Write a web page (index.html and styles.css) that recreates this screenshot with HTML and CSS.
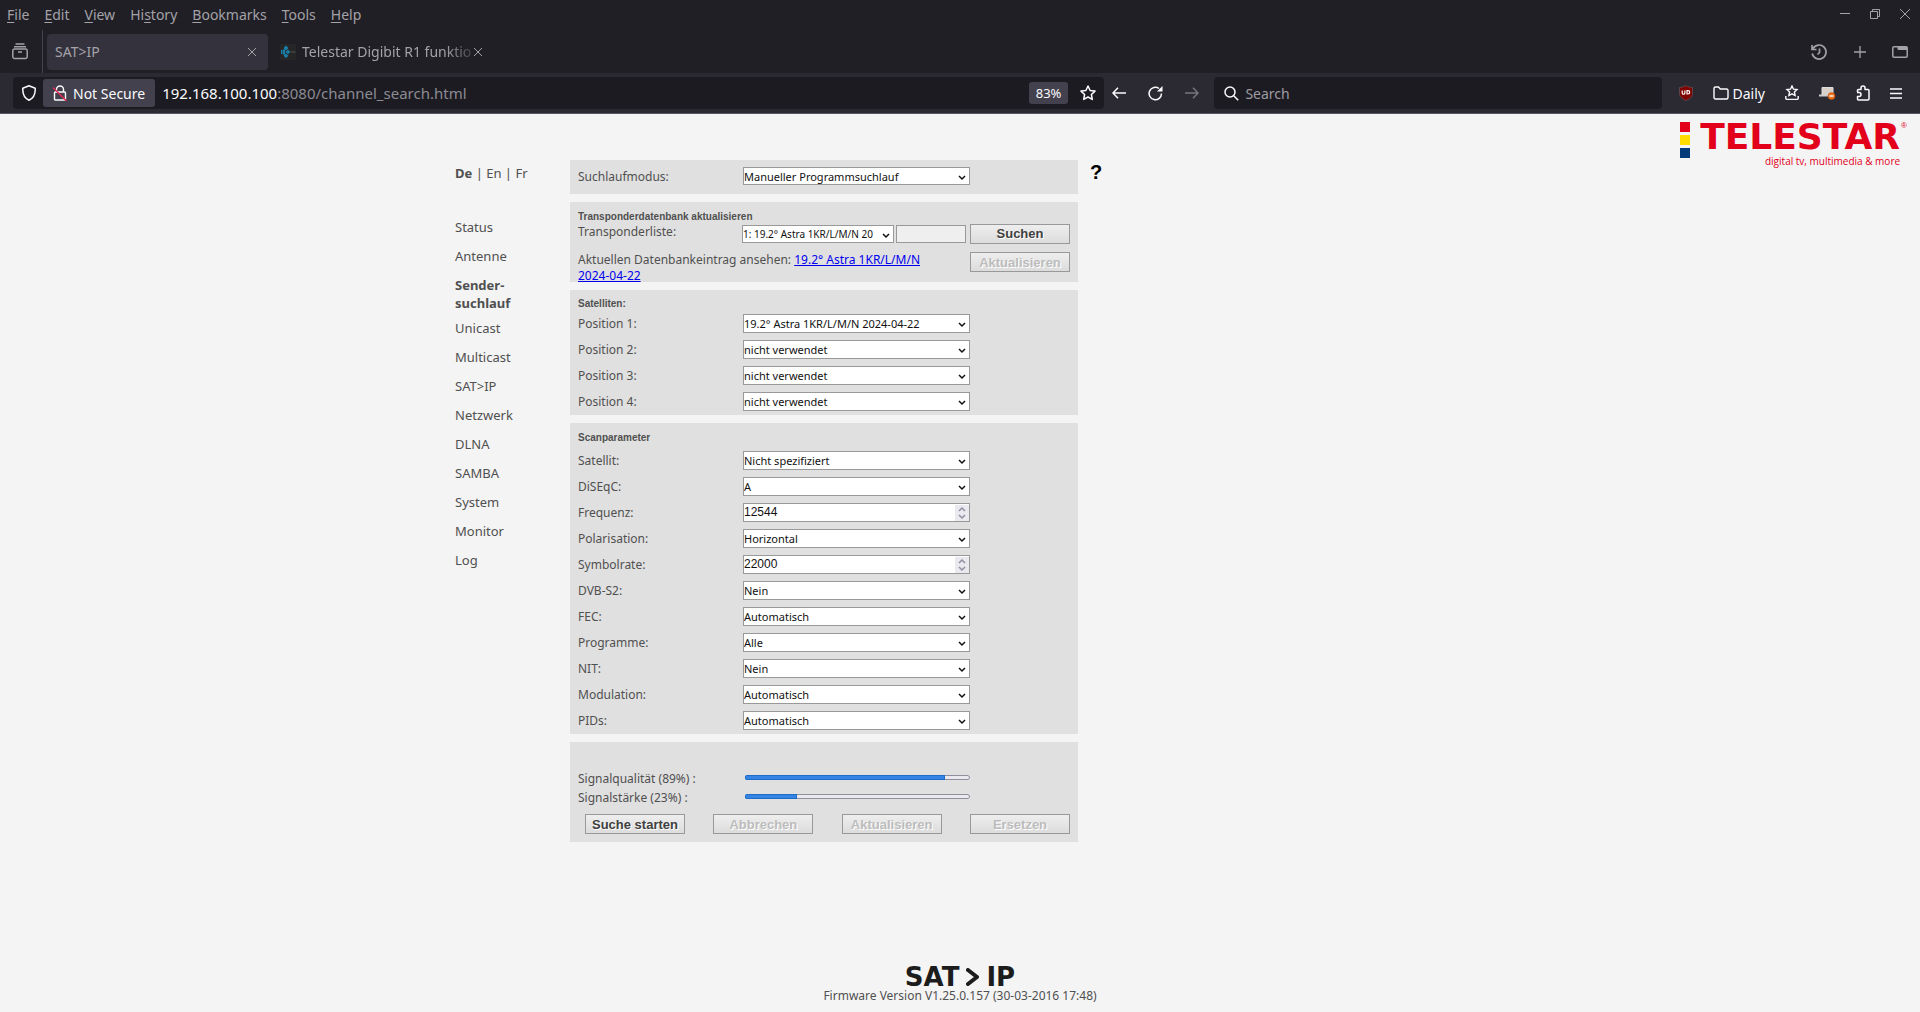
FILE: index.html
```html
<!DOCTYPE html>
<html lang="de">
<head>
<meta charset="utf-8">
<title>SAT&gt;IP</title>
<link rel="stylesheet" href="styles.css">
</head>
<body>
<header class="chrome">
  <div class="menubar">
    <nav class="menus" aria-label="Menu">
      <button><u>F</u>ile</button><button><u>E</u>dit</button><button><u>V</u>iew</button><button>Hi<u>s</u>tory</button><button><u>B</u>ookmarks</button><button><u>T</u>ools</button><button><u>H</u>elp</button>
    </nav>
    <div class="window-controls">
      <button aria-label="Minimize"><svg width="10" height="10"><path d="M0 4.500h10"/></svg></button>
      <button aria-label="Restore"><svg width="10" height="10"><path d="M.5 2.500h7v7h-7zM2.500 2.500v-2h7v7h-2"/></svg></button>
      <button aria-label="Close"><svg width="10" height="10"><path d="M0 0l10 10M10 0L0 10"/></svg></button>
    </div>
  </div>
  <div class="tabstrip">
    <button class="tab-list" aria-label="Tabs"><svg width="16" height="17"><path d="M3.500 1h9M2 3.800h12M2.500 6h11a1.700 1.700 0 0 1 1.700 1.700v6a1.700 1.700 0 0 1-1.700 1.700h-11a1.700 1.700 0 0 1-1.700-1.700v-6A1.700 1.700 0 0 1 2.500 6zM6 9h4" stroke-width="1.500"/></svg></button>
    <div class="tab tab-active"><span class="tab-title">SAT&gt;IP</span><button aria-label="Close tab"><svg width="8" height="8"><path d="M0 0l8 8M8 0L0 8"/></svg></button></div>
    <div class="tab"><svg class="favicon" width="16" height="16"><path fill="#262626" d="M0 0h16v16H0z"/><path fill="#1a7fa8" d="M6 1.500l2.500 2.500L6 6.500 3.500 4zM8 5.500l2.300 2.500L8 10.300 5.700 8zM6 9.500l2.500 2.300L6 14l-2.500-2.200zM1 6h1.500v4H1zM3 5.500h2.200v5H3z"/><path fill="#555" d="M10.500 7.500h5v1h-5z"/></svg><span class="tab-title fade">Telestar Digibit R1 funktio</span><button aria-label="Close tab"><svg width="8" height="8"><path d="M0 0l8 8M8 0L0 8"/></svg></button></div>
    <div class="tab-tools">
      <button aria-label="History"><svg width="18" height="16"><path d="M3 4.500a7 7 0 1 1-.8 5M2 1v4.500h4.500M9.500 4.500v4l-2 2" stroke-width="1.700"/></svg></button>
      <button aria-label="New tab"><svg width="12" height="12"><path d="M6 0v12M0 6h12" stroke-width="1.300"/></svg></button>
      <button aria-label="Tab groups"><svg width="16" height="12"><path d="M2 .8h12A1.200 1.200 0 0 1 15.200 2v8a1.200 1.200 0 0 1-1.200 1.200H2A1.200 1.200 0 0 1 .8 10V2A1.200 1.200 0 0 1 2 .8z" stroke-width="1.500"/><path d="M6 1h9v2.500H6z" fill="currentColor"/></svg></button>
    </div>
  </div>
  <div class="navbar">
    <div class="urlbar">
      <svg width="16" height="16"><path d="M8 .8l6.200 2.400c.3 5-1 9.600-6.200 12C2.800 12.800 1.500 8.200 1.800 3.200z" stroke-width="1.500" stroke-linejoin="round"/></svg>
      <button class="security"><svg width="14" height="16"><path d="M3.500 7V4.500a3.500 3.500 0 0 1 7 0V7M2.500 7h9a1 1 0 0 1 1 1v6a1 1 0 0 1-1 1h-9a1 1 0 0 1-1-1V8a1 1 0 0 1 1-1z" stroke-width="1.400"/><path d="M0 2.500L13.500 16" stroke="#e22850" stroke-width="1.500"/></svg>Not Secure</button>
      <span class="url"><b>192.168.100.100</b>:8080/channel_search.html</span>
      <button class="zoom">83%</button>
      <button aria-label="Bookmark"><svg width="16" height="16"><path d="M8 1l2.100 4.500 4.900.6-3.600 3.400.9 4.900L8 12l-4.300 2.400.9-4.900L1 6.100l4.900-.6z" stroke-width="1.500" stroke-linejoin="round"/></svg></button>
    </div>
    <div class="nav-buttons">
      <button aria-label="Back"><svg width="14" height="12"><path d="M14 6H1M6 .8L1 6l5 5.200" stroke-width="1.500"/></svg></button>
      <button aria-label="Reload"><svg width="15" height="15"><path d="M13.500 7.500A6.200 6.200 0 1 1 11 2.500" stroke-width="1.500"/><path d="M14.500 0v5.500H9z" fill="currentColor" stroke="none"/></svg></button>
      <button aria-label="Forward" disabled><svg width="14" height="12"><path d="M0 6h13M8 .8L13 6l-5 5.200" stroke-width="1.500"/></svg></button>
    </div>
    <label class="searchbar"><svg width="15" height="15"><circle cx="6" cy="6" r="5" stroke-width="1.500"/><path d="M9.700 9.700l4.500 4.500" stroke-width="1.500"/></svg><input type="text" placeholder="Search" aria-label="Search"></label>
    <div class="extensions">
      <button aria-label="Blocker"><svg width="14" height="16"><path d="M7 .5c2 1.400 4 1.800 6.500 2v6c0 3-2.500 5.500-6.500 7C3 14 .5 11.500.5 8.500v-6C3 2.300 5 1.900 7 .5z" fill="#800000" stroke="#666" stroke-width=".6"/><path d="M3.200 5.500v2.400a1.300 1.300 0 0 0 2.700 0V5.500M8 5.600h1a1.500 1.500 0 0 1 0 3.400H8z" stroke="#fff" stroke-width="1.200"/></svg></button>
      <button class="daily"><svg width="16" height="14"><path d="M1 2.500a1.500 1.500 0 0 1 1.500-1.500h3l1.800 2h6A1.500 1.500 0 0 1 15 4.500v7a1.500 1.500 0 0 1-1.500 1.500h-11A1.500 1.500 0 0 1 1 11.500z" stroke-width="1.400"/></svg>Daily</button>
      <button aria-label="Bookmarks"><svg width="14" height="16"><path d="M7 1l1.500 3.200 3.500.4-2.600 2.400.7 3.500L7 8.800l-3.100 1.700.7-3.500L2 4.600l3.500-.4zM.8 11v2.200a1.200 1.200 0 0 0 1.200 1.200h10a1.200 1.200 0 0 0 1.200-1.200V11" stroke-width="1.400"/></svg></button>
      <button aria-label="Proxy"><svg width="17" height="14"><path d="M3 1.500h11V9H3z" fill="#d8d0c8" stroke="#ddd"/><path d="M0 9.500h14" stroke="#ccc" stroke-width="2"/><circle cx="12.500" cy="10" r="3.500" fill="#e8701c" stroke="#c85010" stroke-width=".6"/><path d="M10.500 10h4" stroke="#fff" stroke-width="1.400"/></svg></button>
      <button aria-label="Extensions"><svg width="14" height="16"><path d="M1.500 7V5.500a1 1 0 0 1 1-1h2.500V3a2 2 0 0 1 4 0v1.500h3a1 1 0 0 1 1 1V14a1 1 0 0 1-1 1h-9.500a1 1 0 0 1-1-1v-2.500H3a2 2 0 0 0 0-4H1" stroke-width="1.500" stroke-linejoin="round"/></svg></button>
      <button aria-label="Menu"><svg width="12" height="11"><path d="M0 1h12M0 5.500h12M0 10h12" stroke-width="1.400"/></svg></button>
    </div>
  </div>
</header>
<main class="page">
  <div class="brand">
    <div class="squares"><i class="red"></i><i class="yellow"></i><i class="blue"></i></div>
    <div class="wordmark"><span class="name">TELESTAR</span><span class="tagline">digital tv, multimedia &amp; more</span></div>
    <span class="registered">®</span>
  </div>
  <div class="layout">
    <aside class="sidebar">
      <nav class="languages" aria-label="Sprache"><a href="#de"><b>De</b></a> | <a href="#en">En</a> | <a href="#fr">Fr</a></nav>
      <nav class="sections" aria-label="Bereiche">
        <a href="#status">Status</a><a href="#antenne">Antenne</a><a class="current" href="#suchlauf">Sender-<br>suchlauf</a><a href="#unicast">Unicast</a><a href="#multicast">Multicast</a><a href="#satip">SAT&gt;IP</a><a href="#netzwerk">Netzwerk</a><a href="#dlna">DLNA</a><a href="#samba">SAMBA</a><a href="#system">System</a><a href="#monitor">Monitor</a><a href="#log">Log</a>
      </nav>
    </aside>
    <form class="panels">
      <section class="panel mode">
        <div class="row"><label for="mode">Suchlaufmodus:</label><select id="mode"><option>Manueller Programmsuchlauf</option></select></div>
      </section>
      <section class="panel database">
        <h2>Transponderdatenbank aktualisieren</h2>
        <div class="list-row"><label for="list">Transponderliste:</label><select id="list"><option>1: 19.2° Astra 1KR/L/M/N 20</option></select><input type="text" disabled aria-label="Adresse"><button type="button">Suchen</button></div>
        <div class="entry-row"><p>Aktuellen Datenbankeintrag ansehen: <a href="#entry">19.2° Astra 1KR/L/M/N 2024-04-22</a></p><button type="button" disabled>Aktualisieren</button></div>
      </section>
      <section class="panel satellites">
        <h2>Satelliten:</h2>
        <div class="row"><label for="p1">Position 1:</label><select id="p1"><option>19.2° Astra 1KR/L/M/N 2024-04-22</option></select></div>
        <div class="row"><label for="p2">Position 2:</label><select id="p2"><option>nicht verwendet</option></select></div>
        <div class="row"><label for="p3">Position 3:</label><select id="p3"><option>nicht verwendet</option></select></div>
        <div class="row"><label for="p4">Position 4:</label><select id="p4"><option>nicht verwendet</option></select></div>
      </section>
      <section class="panel scan">
        <h2>Scanparameter</h2>
        <div class="row"><label for="sat">Satellit:</label><select id="sat"><option>Nicht spezifiziert</option></select></div>
        <div class="row"><label for="diseqc">DiSEqC:</label><select id="diseqc"><option>A</option></select></div>
        <div class="row"><label for="freq">Frequenz:</label><span class="number"><input type="number" id="freq" value="12544"><svg width="14" height="16"><path d="M4 6l3-3 3 3M4 10l3 3 3-3"/></svg></span></div>
        <div class="row"><label for="pol">Polarisation:</label><select id="pol"><option>Horizontal</option></select></div>
        <div class="row"><label for="rate">Symbolrate:</label><span class="number"><input type="number" id="rate" value="22000"><svg width="14" height="16"><path d="M4 6l3-3 3 3M4 10l3 3 3-3"/></svg></span></div>
        <div class="row"><label for="s2">DVB-S2:</label><select id="s2"><option>Nein</option></select></div>
        <div class="row"><label for="fec">FEC:</label><select id="fec"><option>Automatisch</option></select></div>
        <div class="row"><label for="prog">Programme:</label><select id="prog"><option>Alle</option></select></div>
        <div class="row"><label for="nit">NIT:</label><select id="nit"><option>Nein</option></select></div>
        <div class="row"><label for="mod">Modulation:</label><select id="mod"><option>Automatisch</option></select></div>
        <div class="row"><label for="pids">PIDs:</label><select id="pids"><option>Automatisch</option></select></div>
      </section>
      <section class="panel signal">
        <div class="meter"><label for="quality">Signalqualität (89%) :</label><progress id="quality" max="100" value="89"></progress></div>
        <div class="meter"><label for="strength">Signalstärke (23%) :</label><progress id="strength" max="100" value="23"></progress></div>
        <div class="actions"><button type="button">Suche starten</button><button type="button" disabled>Abbrechen</button><button type="button" disabled>Aktualisieren</button><button type="button" disabled>Ersetzen</button></div>
      </section>
    </form>
    <a class="help" href="#help">?</a>
  </div>
  <footer><div class="satip">SAT<svg width="13" height="18"><path d="M2 2l9 7-9 7"/></svg>IP</div><p>Firmware Version V1.25.0.157 (30-03-2016 17:48)</p></footer>
</main>
</body>
</html>
```
FILE: styles.css
```css
* { box-sizing: border-box; }
body { margin: 0; min-height: 100vh; display: flex; flex-direction: column; background: #f4f4f4; font-family: "Noto Sans", sans-serif; color: #505050; }
button, input, select { font: inherit; margin: 0; padding: 0; border: 0; background: none; color: inherit; }
a { color: inherit; text-decoration: none; }
h2, p { margin: 0; }

/* Browser chrome */
.chrome { background: #201f25; color: #a3a2a8; font-size: 14px; border-bottom: 1px solid #5b5666; }
.chrome svg { fill: none; stroke: currentColor; display: block; flex: none; }
.chrome button { display: flex; align-items: center; flex: none; }
.menubar { height: 30px; display: flex; justify-content: space-between; padding: 0 10px 2px 7px; }
.menus { display: flex; gap: 15px; }
.chrome .menus button { display: block; white-space: nowrap; }
.menus u { text-underline-offset: 2px; }
.window-controls { display: flex; gap: 20px; }
.tabstrip { height: 43px; display: flex; align-items: center; }
.tab-list { width: 43px; height: 43px; border-right: 1px solid #45444b; margin-right: 4px; }
.chrome .tab-list { padding-left: 12px; }
.tab { width: 221px; height: 36px; padding: 0 12px 0 8px; display: flex; align-items: center; border-radius: 4px; }
.tab + .tab { padding: 0 2px 0 12px; width: 215px; }
.tab-active { background: #34323d; }
.tab-title { flex: 1; white-space: nowrap; }
.favicon { margin-right: 6px; }
.chrome .favicon { stroke: none; }
.fade { margin-right: 3px; mask-image: linear-gradient(to right, #000 85%, #0004); }
.tab-tools { margin-left: auto; padding-right: 12px; display: flex; align-items: center; gap: 26px; }
.navbar { height: 40px; padding: 4px 18px 4px 13px; display: flex; align-items: center; background: #2b2a33; color: #fbfbfe; }
.urlbar, .searchbar { height: 32px; background: #1c1b22; border-radius: 4px; display: flex; align-items: center; }
.urlbar { flex: 1075; padding: 0 8px; }
.security { height: 28px; margin: 0 7px 0 6px; gap: 6px; border-radius: 3px; background: #42414d; }
.chrome .security { padding: 0 10px; }
.url { flex: 1; color: #8c8b92; font-size: 15px; }
.url b { color: #fbfbfe; font-weight: 400; }
.zoom { height: 22px; margin-right: 12px; border-radius: 3px; background: #42414d; }
.chrome .zoom { padding: 0 7px; font-size: 13px; }
.nav-buttons { display: flex; align-items: center; gap: 22px; padding: 0 15px 0 8px; }
.nav-buttons :disabled { color: #76757c; }
.searchbar { flex: 427; padding: 0 10px; gap: 6px; }
.searchbar input { flex: 1; outline: 0; }
.searchbar input::placeholder { color: #9d9ca3; opacity: 1; }
.extensions { display: flex; align-items: center; gap: 20px; padding-left: 17px; }
.extensions .daily { gap: 4px; }

/* Page */
.page { flex: 1; display: flex; flex-direction: column; font-size: 12px; }
.brand { height: 46px; padding: 8px 13px 0 0; display: flex; justify-content: flex-end; }
.squares { display: flex; flex-direction: column; gap: 3px; margin-right: 10px; }
.squares i { width: 10px; height: 10px; }
.red { background: #e2001a; }
.yellow { background: #ffdc00; }
.blue { background: #003a78; }
.wordmark { display: flex; flex-direction: column; color: #e2001a; }
.name { font: 700 36px/30px "DejaVu Sans", sans-serif; white-space: nowrap; }
.registered { font: 8px/8px "Liberation Sans", sans-serif; color: #e2001a; padding-left: 1px; }
.tagline { font: 10px/14px "Open Sans", sans-serif; align-self: flex-end; padding-top: 2px; }
.layout { width: 1010px; max-width: 100%; margin: 0 auto; display: grid; grid-template-columns: 115px 508px auto; align-items: start; justify-content: start; }
.sidebar { font-size: 13px; line-height: 18px; padding-top: 4px; }
.sections { display: flex; flex-direction: column; gap: 11px; padding-top: 36px; }
.current { font-weight: 700; margin-bottom: -4px; }
.panels { display: flex; flex-direction: column; gap: 8px; }
.panel { background: #e0e0e0; padding: 0 8px; }
.panel h2 { font: 700 10px/12px "Liberation Sans", sans-serif; }
.row { height: 26px; display: grid; grid-template-columns: 165px 227px; align-items: center; }
select, .panel input { height: 19px; border: 1px solid #999; border-radius: 0; color: #111; background: #fff; font-size: 11px; width: 100%; }
select { appearance: none; background: #fff url("data:image/svg+xml,%3Csvg xmlns='http://www.w3.org/2000/svg' width='8' height='6'%3E%3Cpath d='M1 1l3 3 3-3' fill='none' stroke='%23111' stroke-width='1.500'/%3E%3C/svg%3E") no-repeat right 3px top 7px; }
.panel input:disabled { background: #efefef; }
.number { position: relative; display: block; height: 19px; }
.panel .number input { appearance: textfield; font: 12px "Liberation Sans", sans-serif; display: block; }
.number input::-webkit-inner-spin-button { appearance: none; }
.number svg { position: absolute; right: 1px; top: 2px; background: #e9e9ef; fill: none; stroke: #9090a0; stroke-width: 1.500; }
.mode { height: 34px; padding-top: 3px; }
.mode select { height: 18px; }
.database { height: 80px; padding-top: 9px; }
.list-row { display: grid; grid-template-columns: 164px 152px 70px 106px; align-items: center; justify-content: start; height: 20px; }
.list-row select { height: 18px; font-size: 10px; }
.list-row label { padding-bottom: 4px; }
.list-row input { margin-left: 2px; height: 18px; }
.list-row button { margin-left: 6px; }
.entry-row { display: flex; justify-content: space-between; align-items: flex-start; padding-top: 9px; line-height: 16px; }
.entry-row p { width: 360px; }
.entry-row p a { color: #00e; text-decoration: underline; }
.panel button { width: 100px; height: 20px; border: 1px solid #999; background: linear-gradient(#eee, #dcdcdc); color: #404040; font: 700 13px "Liberation Sans", sans-serif; text-shadow: 1px 1px 0 #fff; }
.panel button:disabled { color: #bcbcbc; }
.satellites { padding-top: 8px; padding-bottom: 1px; }
.scan { padding-top: 9px; padding-bottom: 1px; }
.scan h2 { margin-bottom: 3px; }
.signal { padding-top: 27px; padding-bottom: 8px; }
.meter { height: 19px; display: grid; grid-template-columns: 167px 225px; align-items: center; }
.meter progress { margin-bottom: 2px; }
progress { appearance: none; width: 100%; height: 5px; border: 0; border-radius: 3px; overflow: hidden; }
progress::-webkit-progress-bar { background: #e9e9ef; box-shadow: inset 0 0 0 1px #8f8f9d; border-radius: 3px; }
progress::-webkit-progress-value { background: #3584e4; box-shadow: inset 0 0 0 1px #1c6cc8; }
.actions { display: flex; justify-content: space-between; padding: 7px 0 0 7px; }
.help { font: 700 20px/24px "Liberation Sans", sans-serif; color: #000; padding-left: 12px; }
footer { margin-top: auto; text-align: center; padding-bottom: 8px; line-height: 16px; }
.satip { display: flex; justify-content: center; align-items: center; gap: 7px; color: #1c1c1c; font: 700 26px/22px "DejaVu Sans", sans-serif; }
.satip svg { fill: none; stroke: #1c1c1c; stroke-width: 4; stroke-linecap: round; stroke-linejoin: round; }
```
